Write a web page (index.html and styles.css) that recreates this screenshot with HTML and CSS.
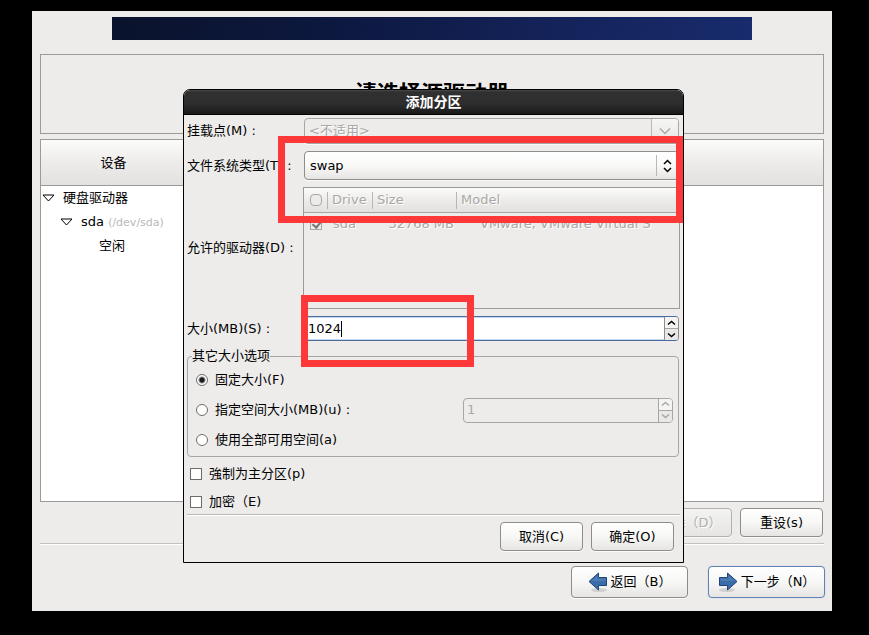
FILE: index.html
```html
<!DOCTYPE html>
<html lang="zh-CN">
<head>
    <meta charset="UTF-8">
    <meta name="viewport" content="width=device-width, initial-scale=1.0">
    <title>添加分区</title>
    <link rel="stylesheet" href="styles.css">
</head>
<body>

    <div class="installer">
        <div class="banner"></div>

        <!-- Heading -->
        <header class="heading">
            <h1>请选择源驱动器</h1>
        </header>

        <!-- Device tree -->
        <section class="devices">
            <div class="devices-head">
                <span>设备</span>
            </div>
            <ul class="tree">
                <li>
                    <svg class="expander" width="13" height="8" viewBox="0 0 13 8"><path d="M1 1h11L6.5 7z"/></svg>
                    <span>硬盘驱动器</span>
                </li>
                <li class="level-2">
                    <svg class="expander" width="13" height="8" viewBox="0 0 13 8"><path d="M1 1h11L6.5 7z"/></svg>
                    <span>sda <small>(/dev/sda)</small></span>
                </li>
                <li class="level-3"><span>空闲</span></li>
            </ul>
        </section>

        <div class="actions">
            <button type="button" class="btn" disabled>删除（D）</button>
            <button type="button" class="btn">重设(s)</button>
        </div>

        <!-- Wizard navigation -->
        <nav class="wizard">
            <button type="button" class="btn btn-nav">
                <svg width="20" height="20" viewBox="0 0 20 20">
                    <ellipse class="arrow-shadow" cx="11" cy="18" rx="8" ry="2"/>
                    <path class="arrow" d="M1 9.5 10.5 1v4.500h8v8h-8V18z"/>
                    <path class="arrow-shine" d="M3 9 9.5 3.300v3.200h8V9z"/>
                </svg>
                <span>返回（B）</span>
            </button>
            <button type="button" class="btn btn-nav btn-default">
                <svg width="20" height="20" viewBox="0 0 20 20">
                    <ellipse class="arrow-shadow" cx="9" cy="18" rx="8" ry="2"/>
                    <path class="arrow" d="M19 9.5 9.5 1v4.500h-8v8h8V18z"/>
                    <path class="arrow-shine" d="M17 9 10.5 3.300v3.200h-8V9z"/>
                </svg>
                <span>下一步（N）</span>
            </button>
        </nav>

        <!-- Add partition dialog -->
        <form class="dialog">
            <h2>添加分区</h2>
            <div class="dialog-body">
                <div class="form-grid">
                    <label for="mount">挂载点(M) :</label>
                    <div class="combo combo-entry">
                        <select id="mount" disabled><option>&lt;不适用&gt;</option></select>
                        <span class="combo-arrow">
                            <svg width="12" height="8" viewBox="0 0 12 8"><path d="M1 1.500l5 5 5-5"/></svg>
                        </span>
                    </div>

                    <label for="fstype">文件系统类型(T) :</label>
                    <div class="combo">
                        <select id="fstype"><option>swap</option></select>
                        <span class="combo-arrow">
                            <svg width="9" height="14" viewBox="0 0 9 14"><path d="M1 5l3.500-3.500L8 5M1 9l3.500 3.500L8 9"/></svg>
                        </span>
                    </div>

                    <span id="drives-label">允许的驱动器(D) :</span>
                    <div class="drives">
                        <table aria-labelledby="drives-label">
                            <thead>
                                <tr>
                                    <th class="col-check"><input type="checkbox" class="check-all" aria-label="All" disabled></th>
                                    <th class="col-drive">Drive</th>
                                    <th class="col-size">Size</th>
                                    <th>Model</th>
                                </tr>
                            </thead>
                            <tbody>
                                <tr>
                                    <td class="col-check"><input type="checkbox" aria-label="sda" checked disabled></td>
                                    <td class="col-drive">sda</td>
                                    <td class="col-size">32768 MB</td>
                                    <td class="col-model">VMware, VMware Virtual S</td>
                                </tr>
                            </tbody>
                        </table>
                    </div>

                    <label for="size">大小(MB)(S) :</label>
                    <div class="spin spin-focus">
                        <input type="text" id="size" value="1024">
                        <span class="caret"></span>
                        <div class="spin-buttons">
                            <button type="button" aria-label="增加"><svg width="9" height="6" viewBox="0 0 9 6"><path d="M1 4.500l3.500-3 3.500 3"/></svg></button>
                            <button type="button" aria-label="减少"><svg width="9" height="6" viewBox="0 0 9 6"><path d="M1 1.500l3.500 3 3.500-3"/></svg></button>
                        </div>
                    </div>
                </div>

                <fieldset>
                    <legend>其它大小选项</legend>
                    <div class="option">
                        <label><input type="radio" name="sizing" checked>固定大小(F)</label>
                    </div>
                    <div class="option">
                        <label><input type="radio" name="sizing">指定空间大小(MB)(u) :</label>
                        <div class="spin spin-disabled">
                            <input type="text" value="1" aria-label="指定空间大小" disabled>
                            <div class="spin-buttons">
                                <button type="button" aria-label="增加" disabled><svg width="9" height="6" viewBox="0 0 9 6"><path d="M1 4.500l3.500-3 3.500 3"/></svg></button>
                                <button type="button" aria-label="减少" disabled><svg width="9" height="6" viewBox="0 0 9 6"><path d="M1 1.500l3.500 3 3.500-3"/></svg></button>
                            </div>
                        </div>
                    </div>
                    <div class="option">
                        <label><input type="radio" name="sizing">使用全部可用空间(a)</label>
                    </div>
                </fieldset>

                <div class="checks">
                    <label><input type="checkbox">強制为主分区(p)</label>
                    <label><input type="checkbox">加密（E)</label>
                </div>

                <div class="dialog-buttons">
                    <button type="button" class="btn">取消(C)</button>
                    <button type="button" class="btn">确定(O)</button>
                </div>
            </div>

            <!-- Highlights -->
            <div class="mark mark-type"></div>
            <div class="mark mark-size"></div>
        </form>
    </div>

</body>
</html>
```
FILE: styles.css
```css
* {
    margin: 0;
    padding: 0;
    box-sizing: border-box;
}

body {
    min-height: 100vh;
    padding: 11px 37px 24px 32px;
    background: #000;
    color: #000;
    font-family: "DejaVu Sans", "Noto Sans CJK SC", sans-serif;
    font-size: 13px;
    line-height: 18px;
    display: flex;
}

button,
input,
select {
    font: inherit;
    color: inherit;
}

.installer {
    position: relative;
    flex: 1;
    display: flex;
    flex-direction: column;
    padding: 6px 8px 13px;
    background: #edeceb;
}

.banner {
    height: 23px;
    margin: 0 72px 14px;
    background: linear-gradient(100deg, #0a132b, #0d1840 35%, #14235a 70%, #182b6c);
}

.heading {
    height: 80px;
    margin-bottom: 5px;
    border: 1px solid #9c9a98;
    display: flex;
    align-items: center;
    justify-content: center;
}

h1 {
    font-size: 22px;
    line-height: 30px;
}

/* Device tree */
.devices {
    flex: 1;
    border: 1px solid #9c9a98;
    background: #fff;
}

.devices-head {
    display: flex;
    align-items: center;
    height: 46px;
    border-bottom: 1px solid #9c9a98;
    background: linear-gradient(#fbfbfa, #edeceb 50%, #e2e1df);
}

.devices-head span {
    width: 145px;
    text-align: center;
}

.tree {
    list-style: none;
}

.tree li {
    display: flex;
    align-items: center;
    gap: 8px;
    height: 24px;
    padding-left: 1px;
}

.tree .level-2 {
    padding-left: 19px;
}

.tree .level-3 {
    padding-left: 58px;
}

.tree small {
    font-size: 11px;
    color: #b8b8b8;
}

.expander {
    fill: #fff;
    stroke: #000;
}

/* Buttons */
.btn {
    min-width: 83px;
    height: 29px;
    border: 1px solid #8f8c89;
    border-radius: 4px;
    background: linear-gradient(#fff, #f7f7f6 50%, #e6e5e3);
    box-shadow: 0 1px 0 #fafafa;
    text-align: center;
}

.btn:disabled {
    border-color: #b3b0ad;
    background: linear-gradient(#f3f3f2, #e6e5e3);
    color: #b0aeab;
    text-shadow: 1px 1px #fff;
}

.actions {
    display: flex;
    justify-content: flex-end;
    gap: 8px;
    margin-top: 6px;
    padding: 0 1px 6px 0;
    border-bottom: 1px solid #c4c2c0;
    box-shadow: 0 1px 0 #fff;
}

.wizard {
    display: flex;
    justify-content: flex-end;
    gap: 20px;
    margin: 22px -1px 0 0;
}

.btn-nav {
    display: flex;
    align-items: center;
    justify-content: center;
    gap: 3px;
    width: 117px;
    height: 32px;
}

.btn-default {
    border-color: #5f84b5;
    box-shadow: 0 0 1px #7da3d6;
}

.arrow {
    fill: #3a6ca8;
    stroke: #1f4479;
}

.arrow-shine {
    fill: #5f8cc2;
    opacity: 0.5;
}

.arrow-shadow {
    fill: #000;
    opacity: 0.12;
}

/* Dialog */
.dialog {
    position: absolute;
    top: 78px;
    left: 151px;
    width: 501px;
    border: 1px solid #000;
    border-radius: 7px 7px 0 0;
    background: #edeceb;
}

h2 {
    height: 25px;
    border-bottom: 1px solid #000;
    border-radius: 6px 6px 0 0;
    background: linear-gradient(#4a4a4a, #303030 2px, #2e2e2e 55%, #191919);
    color: #fff;
    font-size: 14px;
    line-height: 24px;
    text-align: center;
}

.dialog-body {
    padding: 3px 3px 11px;
}

.form-grid {
    display: grid;
    grid-template-columns: 116px 1fr;
    align-items: center;
    row-gap: 7px;
    white-space: nowrap;
}

.combo {
    position: relative;
    height: 29px;
    margin: 0 1px;
    border: 1px solid #8f8c89;
    border-radius: 4px;
    background: linear-gradient(#fff, #f9f9f8 50%, #e6e5e3);
    box-shadow: 0 1px 0 #fafafa;
}

.combo select {
    appearance: none;
    display: block;
    width: 100%;
    height: 100%;
    padding: 0 28px 0 5px;
    border: none;
    background: transparent;
    opacity: 1;
}

.combo-arrow {
    position: absolute;
    top: 3px;
    right: 1px;
    bottom: 3px;
    width: 21px;
    border-left: 1px solid #bab8b5;
    display: flex;
    align-items: center;
    justify-content: center;
    pointer-events: none;
}

.combo-arrow path,
.spin-buttons path {
    fill: none;
    stroke: #000;
    stroke-width: 1.5;
}

.combo-entry {
    height: 26px;
    border-color: #a8a6a4;
    background: #edeceb;
}

.combo-entry select {
    padding-left: 4px;
    color: #aaa8a6;
    text-shadow: 1px 1px #fff;
}

.combo-entry .combo-arrow {
    top: 0;
    right: 0;
    bottom: 0;
    width: 27px;
    border-radius: 0 3px 3px 0;
    background: linear-gradient(#f6f6f5, #e6e5e3);
}

.combo-entry .combo-arrow path,
.spin-disabled .spin-buttons path {
    stroke: #aaa8a6;
}

/* Drives table */
.drives {
    height: 122px;
    border: 1px solid #9c9a98;
}

.drives table {
    width: 100%;
    border-collapse: collapse;
    table-layout: fixed;
    color: #aaa8a6;
    text-align: left;
    text-shadow: 1px 1px #fff;
}

.drives thead {
    background: linear-gradient(#fbfbfa, #edeceb 50%, #e2e1df);
    box-shadow: 0 1px 0 #a8a6a4;
}

.drives th {
    height: 24px;
    padding-left: 4px;
    font-weight: normal;
    background: linear-gradient(#b8b6b4, #b8b6b4) right center / 1px 17px no-repeat;
}

.drives th:last-child {
    background: none;
}

.drives td {
    height: 24px;
}

.drives .col-check {
    width: 24px;
    padding-left: 6px;
}

.drives .col-drive {
    width: 45px;
}

.drives td.col-drive {
    padding-left: 5px;
}

.drives .col-size {
    width: 84px;
}

.drives td.col-size {
    padding-right: 3px;
    text-align: right;
}

.drives .col-model {
    padding-left: 23px;
}

/* Check boxes and radios */
input[type="checkbox"],
input[type="radio"] {
    appearance: none;
    display: block;
    flex: none;
    width: 12px;
    height: 12px;
    border: 1px solid #6e6c6a;
    background: #fff;
}

input[type="radio"] {
    border-radius: 50%;
}

input[type="radio"]:checked {
    background: radial-gradient(circle, #1a1a1a 2px, #fff 4px);
}

input[type="checkbox"]:disabled {
    border-color: #a8a6a4;
    background: #edeceb;
}

input[type="checkbox"]:checked::before {
    content: "";
    display: block;
    width: 4px;
    height: 7px;
    margin-left: 3px;
    border: solid #777;
    border-width: 0 2px 2px 0;
    transform: rotate(40deg);
}

input.check-all {
    border-radius: 4px;
}

/* Spin boxes */
.spin {
    position: relative;
    display: flex;
    height: 25px;
    border: 1px solid #8f8c89;
    border-radius: 4px;
    background: #fff;
    overflow: hidden;
}

.form-grid .spin {
    margin: 0 1px;
}

.spin input {
    flex: 1;
    min-width: 0;
    padding-left: 3px;
    border: none;
    background: transparent;
    outline: none;
}

.spin-focus input {
    box-shadow: inset 0 1px #c3d6ee, inset 0 -1px #c3d6ee;
}

.spin-focus {
    border-top-color: #4a6d9e;
    border-bottom-color: #4a6d9e;
}

.caret {
    position: absolute;
    top: 4px;
    left: 36px;
    width: 1px;
    height: 16px;
    background: #000;
}

.spin-buttons {
    display: flex;
    flex-direction: column;
    width: 14px;
    border-left: 1px solid #8f8c89;
}

.spin-buttons button {
    flex: 1;
    display: flex;
    align-items: center;
    justify-content: center;
    border: none;
    background: #f4f4f3;
}

.spin-buttons button + button {
    border-top: 1px solid #a8a6a4;
    background: #e9e8e6;
}

.spin-disabled {
    width: 210px;
    border-color: #a8a6a4;
    background: #edeceb;
    color: #aaa8a6;
}

.spin-disabled .spin-buttons {
    border-color: #a8a6a4;
}

/* Size options */
fieldset {
    margin: 6px 1px 0 0;
    padding: 0 5px 1px 4px;
    border: 1px solid #a8a6a4;
    border-radius: 4px;
}

legend {
    line-height: 18px;
}

.option {
    display: flex;
    align-items: center;
    justify-content: space-between;
    height: 30px;
    padding-left: 4px;
}

.option label,
.checks label {
    display: flex;
    align-items: center;
    gap: 7px;
}

.checks {
    display: grid;
    row-gap: 4px;
    padding: 5px 3px 0;
}

.checks label {
    height: 24px;
}

.dialog-buttons {
    display: flex;
    justify-content: flex-end;
    gap: 8px;
    padding: 7px 6px 0 0;
    border-top: 1px solid #bab8b5;
    box-shadow: inset 0 1px #fff;
}

/* Red highlight frames */
.mark {
    position: absolute;
    border: 7px solid #fc3838;
    pointer-events: none;
}

.mark-type {
    top: 46px;
    left: 94px;
    width: 405px;
    height: 87px;
}

.mark-size {
    top: 205px;
    left: 117px;
    width: 173px;
    height: 72px;
}
```
